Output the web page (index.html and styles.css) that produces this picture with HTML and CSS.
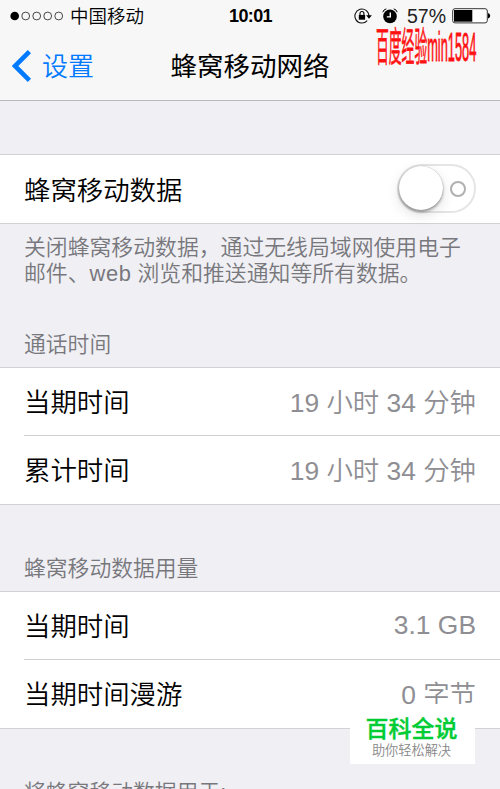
FILE: index.html
```html
<!DOCTYPE html>
<html lang="zh-CN">
<head>
<meta charset="utf-8">
<title>蜂窝移动网络</title>
<link rel="stylesheet" href="styles.css">
</head>
<body>
<main class="screen">
  <header class="header">
    <div class="status">
      <div class="carrier">
        <svg class="signal" width="54" height="10" viewBox="0 0 54 10" fill="none" stroke="#333" stroke-width="0.9"><circle cx="4.7" cy="5" r="4.3" fill="#000" stroke="none"/><circle cx="15.7" cy="5" r="3.9"/><circle cx="26.7" cy="5" r="3.9"/><circle cx="37.7" cy="5" r="3.9"/><circle cx="48.7" cy="5" r="3.9"/></svg>
        <span>中国移动</span>
      </div>
      <time class="clock">10:01</time>
      <div class="indicators">
        <svg width="19" height="16" viewBox="0 0 19 16"><path d="M13.2 12.6A7 7 0 1 1 14.9 8" fill="none" stroke="#111" stroke-width="1.1"/><path d="M12.1 7.2h5.8L15 10.8z"/><path d="M4.8 6.9h6.3v4.8H4.8z"/><path d="M6 7V5.5a1.9 1.9 0 0 1 3.9 0V7" fill="none" stroke="#000" stroke-width="1.1"/></svg>
        <svg class="alarm" width="16" height="16" viewBox="0 0 16 16"><circle cx="8" cy="8.4" r="6.8"/><path d="M.8 4.2Q1.5 1.5 4.3.9M15.2 4.2Q14.5 1.5 11.7.9" fill="none" stroke="#000" stroke-width="1"/><path d="M8.3 4.5v4.4H4.8" fill="none" stroke="#fff" stroke-width="1.4"/></svg>
        <span class="percent">57%</span>
        <svg class="battery" width="39" height="16" viewBox="0 0 39 16"><rect x=".7" y=".7" width="34.6" height="14.2" rx="2.3" fill="#fff" stroke="#333"/><path d="M2 2h18.3v11.7H2z"/><path d="M36 5q2.2.6 2.2 2.8T36 10.6z"/></svg>
      </div>
    </div>
    <nav class="nav">
      <a class="back"><svg width="20" height="32" viewBox="0 0 20 32"><path d="M17.4 1.7 3 16l14.4 14.3" fill="none" stroke="#007aff" stroke-width="4.6"/></svg><span>设置</span></a>
      <h1 class="title">蜂窝移动网络</h1>
    </nav>
    <span class="author">百度经验min1584</span>
  </header>

  <section class="group group-first">
    <div class="row"><span>蜂窝移动数据</span><span class="switch"><i class="ring"></i><i class="knob"></i></span></div>
  </section>
  <p class="note">关闭蜂窝移动数据，通过无线局域网使用电子<br>邮件、<span class="latin">web</span> 浏览和推送通知等所有数据。</p>

  <h2 class="caption caption-calls">通话时间</h2>
  <section class="group">
    <div class="row"><span>当期时间</span><span class="value">19 小时 34 分钟</span></div>
    <div class="row"><span>累计时间</span><span class="value">19 小时 34 分钟</span></div>
  </section>

  <h2 class="caption">蜂窝移动数据用量</h2>
  <section class="group">
    <div class="row"><span>当期时间</span><span class="value value-latin">3.1 GB</span></div>
    <div class="row"><span>当期时间漫游</span><span class="value">0 字节</span></div>
  </section>
  <h2 class="caption">将蜂窝移动数据用于:</h2>

  <aside class="brand"><strong>百科全说</strong><span>助你轻松解决</span></aside>
</main>
</body>
</html>
```
FILE: styles.css
```css
* { box-sizing: border-box; }
body { margin: 0; background: #efeff4; }
.screen {
  position: relative;
  height: 789px;
  overflow: hidden;
  background: #efeff4;
  color: #000;
  font-family: "Liberation Sans", "Noto Sans CJK SC", sans-serif;
  font-weight: 350;
  font-size: 26.4px;
}
.header {
  position: relative;
  height: 101px;
  background: #f7f7f7;
  border-bottom: 1px solid #b8b8bd;
}
.status {
  display: grid;
  grid-template-columns: 1fr auto 1fr;
  align-items: center;
  height: 32px;
  padding: 0 9px 0 10px;
  font-size: 18.5px;
  line-height: 32px;
}
.carrier { display: flex; align-items: center; gap: 6px; }
.carrier span { padding-top: 2px; line-height: 30px; }
.clock { font-weight: 700; font-size: 18px; letter-spacing: -0.6px; }
.indicators { display: flex; align-items: center; justify-content: flex-end; }
.alarm { margin-left: 9px; }
.percent { margin: 0 6px 0 9px; font-size: 19.5px; color: #222; }
.nav {
  display: grid;
  grid-template-columns: 1fr auto 1fr;
  align-items: center;
  height: 64px;
  padding-left: 12px;
}
.back { display: flex; align-items: center; gap: 10px; margin-top: 4px; color: #007aff; font-size: 26px; }
.back span { margin-top: -3px; }
.title { margin: 0 0 0 -12px; font-size: 26.5px; font-weight: 400; }
.author {
  position: absolute;
  left: 376px;
  top: 23px;
  color: #f11;
  font-size: 40px;
  line-height: 48px;
  white-space: nowrap;
  -webkit-text-stroke: .8px #f11;
  transform: scaleX(.32);
  transform-origin: 0 0;
}
.group {
  background: #fff;
  border-top: 1px solid #d2d2d6;
  border-bottom: 1px solid #d2d2d6;
}
.group-first { margin-top: 53px; }
.row {
  display: flex;
  align-items: center;
  justify-content: space-between;
  height: 67px;
  margin-left: 24px;
  padding-right: 24px;
  padding-bottom: 3px;
  white-space: nowrap;
}
.group-first .row { height: 68px; padding-bottom: 2px; }
.row + .row { height: 69px; border-top: 1px solid #d2d2d6; }
.value { color: #8e8e93; }
.value-latin { padding-top: 3px; }
.switch {
  position: relative;
  width: 79px;
  height: 49px;
  border: 2px solid #e5e5e5;
  border-radius: 25px;
}
.knob {
  position: absolute;
  left: 0;
  top: 0;
  width: 44px;
  height: 44px;
  border-radius: 50%;
  background: #fff;
  box-shadow: 0 2px 3px rgba(0,0,0,.35), 0 0 1px rgba(0,0,0,.3), 0 5px 14px rgba(0,0,0,.12);
}
.ring {
  position: absolute;
  left: 51px;
  top: 15px;
  width: 16px;
  height: 16px;
  border: 2px solid #b0b0b0;
  border-radius: 50%;
}
.note {
  height: 93px;
  margin: 0;
  padding: 11px 0 0 24px;
  color: #77777c;
  font-size: 21.85px;
  line-height: 26px;
  white-space: nowrap;
}
.latin { letter-spacing: .6px; }
.caption {
  height: 86px;
  margin: 0;
  padding: 48px 24px 0;
  color: #77777c;
  font-size: 21.8px;
  font-weight: 350;
  line-height: 32px;
}
.caption-calls { height: 50px; padding-top: 12px; }
.brand {
  position: absolute;
  left: 350px;
  top: 704px;
  width: 125px;
  height: 60px;
  display: flex;
  flex-direction: column;
  align-items: center;
  padding: 12px 2px 0 0;
  background: #fff;
}
.brand strong { color: #0c3; font-size: 23px; font-weight: 500; line-height: 27px; -webkit-text-stroke: .4px #0c3; }
.brand span { color: #888; font-size: 13.2px; line-height: 16px; }
```
